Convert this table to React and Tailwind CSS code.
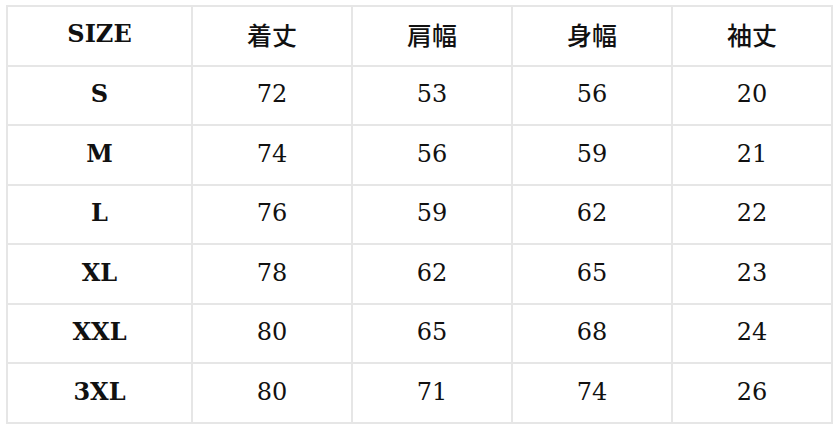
import React from "react";

const rows = [
  ["S", "72", "53", "56", "20"],
  ["M", "74", "56", "59", "21"],
  ["L", "76", "59", "62", "22"],
  ["XL", "78", "62", "65", "23"],
  ["XXL", "80", "65", "68", "24"],
  ["3XL", "80", "71", "74", "26"],
];
const heads = ["着丈", "肩幅", "身幅", "袖丈"];

export default function App() {
  return (
    <div
      className="w-[838px] h-[431px] bg-white pt-[5px] pl-[6px]"
      style={{ fontFamily: '"DejaVu Serif", "Noto Sans CJK JP", serif' }}
    >
      <table className="border-collapse table-fixed w-[826px] text-[24px] text-[#111111]">
        <colgroup>
          <col className="w-[185px]" />
          <col className="w-[160px]" />
          <col className="w-[160px]" />
          <col className="w-[160px]" />
          <col className="w-[160px]" />
        </colgroup>
        <tbody>
          <tr className="h-[59.5px]">
            <td className="border-2 border-[#e6e6e6] text-center font-bold p-0 pb-[3px]">SIZE</td>
            {heads.map((h) => (
              <td
                key={h}
                className="border-2 border-[#e6e6e6] text-center p-0 pb-[3px] font-medium text-[25px]"
                style={{ fontFamily: '"Noto Sans CJK JP", serif' }}
              >
                {h}
              </td>
            ))}
          </tr>
          {rows.map((r) => (
            <tr key={r[0]} className="h-[59.5px]">
              {r.map((c, i) => (
                <td
                  key={i}
                  className={
                    "border-2 border-[#e6e6e6] text-center p-0 pb-[2px] " +
                    (i === 0 ? "font-bold" : "font-normal")
                  }
                >
                  {c}
                </td>
              ))}
            </tr>
          ))}
        </tbody>
      </table>
    </div>
  );
}
